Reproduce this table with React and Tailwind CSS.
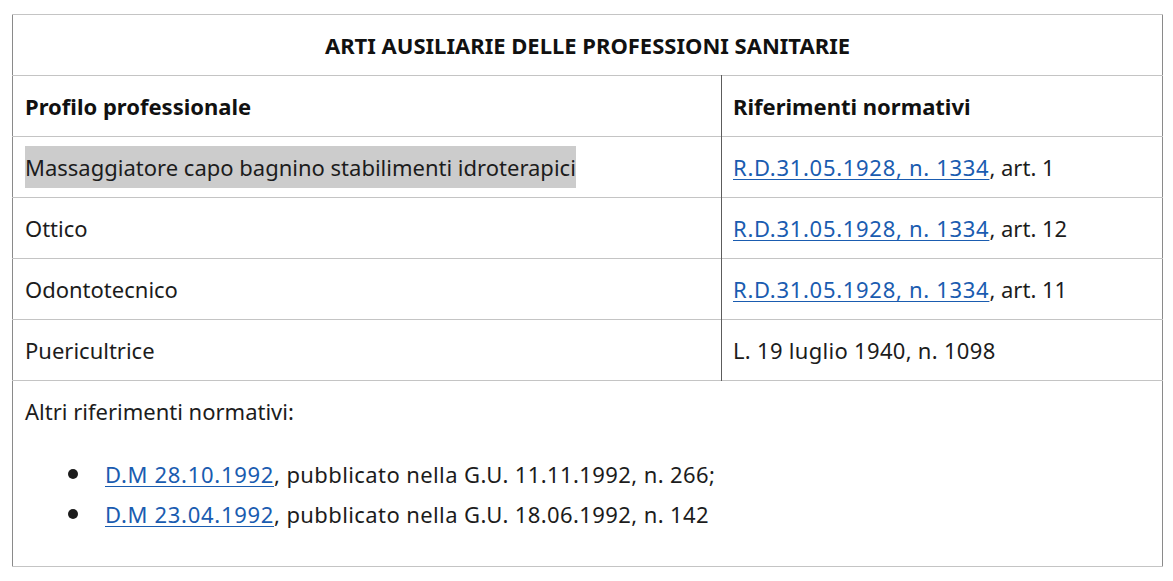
import React from 'react';

const link = 'text-[#1a5cb0] underline underline-offset-[3px] decoration-1 tracking-[0.7px]';

const rows = [
  { name: 'Massaggiatore capo bagnino stabilimenti idroterapici', ref: true, art: 'art. 1', mark: true },
  { name: 'Ottico', ref: true, art: 'art. 12' },
  { name: 'Odontotecnico', ref: true, art: 'art. 11' },
  { name: 'Puericultrice', plain: 'L. 19 luglio 1940, n. 1098' },
];

export default function App() {
  return (
    <div className="min-h-screen bg-white pt-[14px] pl-[12px] pr-[10px] text-[#1c1c1c]" style={{ fontFamily: '"Noto Sans", "Open Sans", sans-serif' }}>
      <table className="w-[1151px] border-collapse border-x border-x-[#8a8a8a] text-[22px]">
        <tbody>
          <tr className="h-[61px] border-y border-[#c4c4c4]">
            <th colSpan="2" className="text-center text-[22px] font-bold text-[#111]">
              ARTI AUSILIARIE DELLE PROFESSIONI SANITARIE
            </th>
          </tr>
          <tr className="h-[61px] border-b border-[#c4c4c4]">
            <th className="w-[709px] border-r border-r-[#5c5c5c] pl-[12px] text-left text-[22px] font-bold text-[#111]">Profilo professionale</th>
            <th className="pl-[11px] text-left text-[22px] font-bold text-[#111]">Riferimenti normativi</th>
          </tr>
          {rows.map((r) => (
            <tr key={r.name} className="h-[61px] border-b border-[#c4c4c4]">
              <td className="border-r border-r-[#5c5c5c] pl-[12px]">
                <span className={r.mark ? 'bg-[#cccccc] py-[6px]' : ''}>{r.name}</span>
              </td>
              <td className="pl-[11px]">
                {r.ref ? (
                  <>
                    <a href="#" className={link}>R.D.31.05.1928, n. 1334</a>, {r.art}
                  </>
                ) : (
                  <span className="tracking-[0.3px]">{r.plain}</span>
                )}
              </td>
            </tr>
          ))}
          <tr className="border-b border-[#c4c4c4]">
            <td colSpan="2" className="h-[186px] pl-[12px] pt-[14px] align-top">
              <p>Altri riferimenti normativi:</p>
              <ul className="mt-[26px] pl-[43px] leading-[40px] tracking-[0.4px]">
                <li className="flex items-center">
                  <span className="mr-[27px] h-[10px] w-[10px] rounded-full bg-[#1c1c1c]" />
                  <span>
                    <a href="#" className={link}>D.M 28.10.1992</a>, pubblicato nella G.U. 11.11.1992, n. 266;
                  </span>
                </li>
                <li className="flex items-center">
                  <span className="mr-[27px] h-[10px] w-[10px] rounded-full bg-[#1c1c1c]" />
                  <span>
                    <a href="#" className={link}>D.M 23.04.1992</a>, pubblicato nella G.U. 18.06.1992, n. 142
                  </span>
                </li>
              </ul>
            </td>
          </tr>
        </tbody>
      </table>
    </div>
  );
}
